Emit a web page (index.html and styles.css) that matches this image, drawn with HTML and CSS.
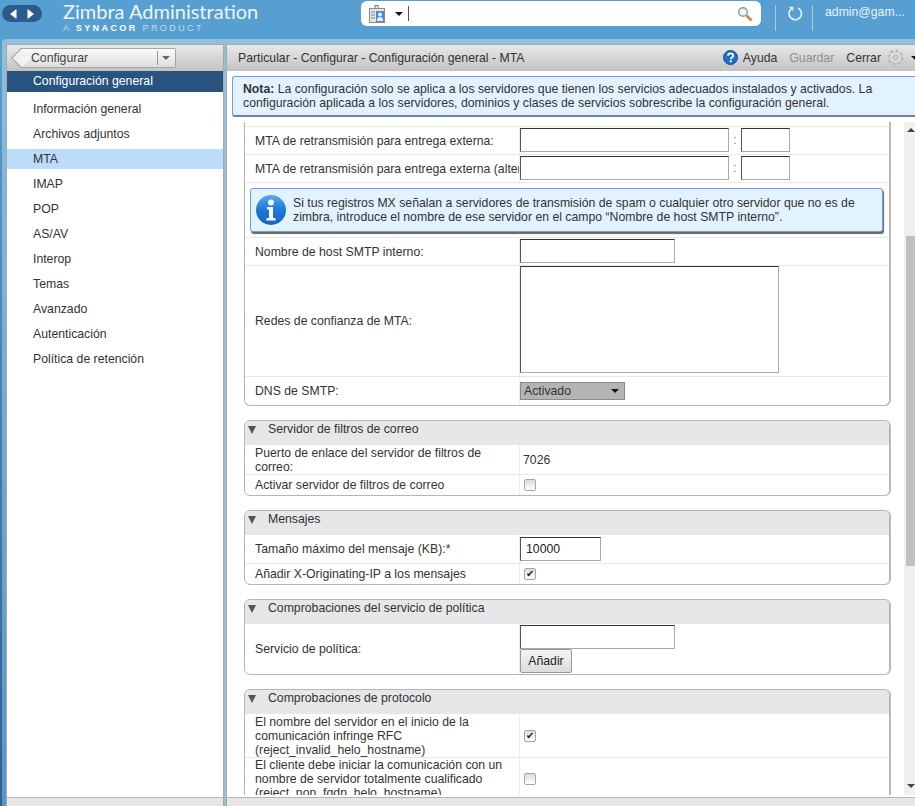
FILE: index.html
```html
<!DOCTYPE html>
<html lang="es">

<head>
    <meta charset="UTF-8">
    <title>Zimbra Administration</title>
    <link rel="stylesheet" href="styles.css">
</head>

<body>
    <header class="topbar">
        <div class="nav-pill">
            <svg width="7" height="10" viewBox="0 0 7 10"><path d="M6.500 0v10L0 5z" fill="#fff"/></svg>
            <svg width="7" height="10" viewBox="0 0 7 10"><path d="M.5 0v10L7 5z" fill="#fff"/></svg>
        </div>
        <div class="brand">
            <div class="brand-name">Zimbra Administration</div>
            <div class="brand-sub">A <b>SYNACOR</b> PRODUCT</div>
        </div>
        <div class="search">
            <svg class="search-type" width="16" height="18" viewBox="0 0 16 18">
                <rect x="6" y="0.5" width="3" height="4" fill="#fff" stroke="#777"/>
                <rect x="0.5" y="3.5" width="15" height="14" fill="#e4e4e4" stroke="#8a8a8a"/>
                <rect x="7" y="6" width="8" height="11" fill="#3d8fdc"/>
                <circle cx="11" cy="9.5" r="2" fill="#e8f2fb"/>
                <path d="M8 16c0-3 1-4 3-4s3 1 3 4z" fill="#e8f2fb"/>
                <path d="M2 7h4M2 10h4M2 13h4" stroke="#888"/>
            </svg>
            <span class="caret"></span>
            <span class="search-cursor"></span>
            <svg class="search-go" width="16" height="16" viewBox="0 0 16 16">
                <circle cx="6" cy="6" r="4.300" fill="#eef4f4" stroke="#7f9c9c" stroke-width="1.400"/>
                <path d="M9.500 9.500l5 5" stroke="#c98f2c" stroke-width="2.600"/>
            </svg>
        </div>
        <div class="top-sep"></div>
        <svg class="refresh" width="16" height="16" viewBox="0 0 16 16">
            <path d="M5.200 3.200A6.200 6.200 0 1 0 11 3" fill="none" stroke="#e4f0f8" stroke-width="1.700"/>
            <path d="M1.800 1.800h4.600v4.400z" fill="#e4f0f8"/>
        </svg>
        <div class="top-sep"></div>
        <div class="user">admin@gam...</div>
    </header>

    <div class="shell">
        <aside class="side">
            <div class="toolbar side-toolbar">
                <div class="crumb">
                    <span class="crumb-label">Configurar</span>
                    <span class="crumb-arrow"></span>
                </div>
            </div>
            <div class="side-title">Configuración general</div>
            <ul class="side-list">
                <li>Información general</li>
                <li>Archivos adjuntos</li>
                <li class="selected">MTA</li>
                <li>IMAP</li>
                <li>POP</li>
                <li>AS/AV</li>
                <li>Interop</li>
                <li>Temas</li>
                <li>Avanzado</li>
                <li>Autenticación</li>
                <li>Política de retención</li>
            </ul>
            <div class="foot"></div>
        </aside>

        <main class="main">
            <div class="toolbar main-toolbar">
                <span class="path">Particular - Configurar - Configuración general - MTA</span>
                <span class="actions">
                    <svg width="15" height="15" viewBox="0 0 15 15">
                        <circle cx="7.500" cy="7.500" r="7" fill="#1f6fc4" stroke="#15508f"/>
                        <path d="M5 5.800c0-3.200 5.200-3.200 5.200-.2 0 2-2.400 1.800-2.400 3.600" fill="none" stroke="#fff" stroke-width="1.800"/>
                        <rect x="6.800" y="10.300" width="2" height="2" fill="#fff"/>
                    </svg>
                    <span class="action">Ayuda</span>
                    <span class="action disabled">Guardar</span>
                    <span class="action">Cerrar</span>
                    <svg class="gear" width="17" height="17" viewBox="0 0 18 18">
                        <circle cx="9" cy="9" r="7.300" fill="none" stroke="#bcbcbc" stroke-width="2.800" stroke-dasharray="2.900 2.830"/>
                        <circle cx="9" cy="9" r="6" fill="#e4e4e4" stroke="#bcbcbc"/>
                        <circle cx="9" cy="9" r="2.800" fill="#d2d2d2" stroke="#ababab"/>
                    </svg>
                    <span class="caret small"></span>
                </span>
            </div>

            <div class="note">
                <b>Nota:</b> La configuración solo se aplica a los servidores que tienen los servicios adecuados instalados y activados. La<br>
                configuración aplicada a los servidores, dominios y clases de servicios sobrescribe la configuración general.
            </div>

            <div class="scroll-area">
                <div class="content">
                    <section class="card card-cut">
                        <div class="row blank"></div>
                        <div class="row r-28">
                            <div class="lbl clip">MTA de retransmisión para entrega externa:</div>
                            <div class="val"><span class="field w209"></span><span class="colon">:</span><span class="field w49"></span></div>
                        </div>
                        <div class="row r-28">
                            <div class="lbl clip">MTA de retransmisión para entrega externa (alternativa):</div>
                            <div class="val"><span class="field w209"></span><span class="colon">:</span><span class="field w49"></span></div>
                        </div>
                        <div class="row-full">
                            <div class="info">
                                <svg class="info-icon" width="30" height="30" viewBox="0 0 30 30">
                                    <defs>
                                        <linearGradient id="info-fill" x1="0" y1="0" x2="0" y2="1">
                                            <stop offset="0" stop-color="#5aa9ee"/>
                                            <stop offset="0.5" stop-color="#1c78d6"/>
                                            <stop offset="1" stop-color="#1565bd"/>
                                        </linearGradient>
                                    </defs>
                                    <circle cx="15" cy="15" r="15" fill="url(#info-fill)"/>
                                    <circle cx="15" cy="7.500" r="3" fill="#fff"/>
                                    <path d="M11 12h6v11h2.500v2.500h-9V23H13v-8.500h-2z" fill="#fff"/>
                                </svg>
                                <p>Si tus registros MX señalan a servidores de transmisión de spam o cualquier otro servidor que no es de<br>zimbra, introduce el nombre de ese servidor en el campo “Nombre de host SMTP interno”.</p>
                            </div>
                        </div>
                        <div class="row r-28">
                            <div class="lbl">Nombre de host SMTP interno:</div>
                            <div class="val"><span class="field w155"></span></div>
                        </div>
                        <div class="row r-111">
                            <div class="lbl">Redes de confianza de MTA:</div>
                            <div class="val val-top"><span class="field area"></span></div>
                        </div>
                        <div class="row r-28 last">
                            <div class="lbl">DNS de SMTP:</div>
                            <div class="val"><span class="select">Activado<span class="caret"></span></span></div>
                        </div>
                    </section>

                    <section class="card">
                        <h3 class="card-head">Servidor de filtros de correo</h3>
                        <div class="row r-30">
                            <div class="lbl">Puerto de enlace del servidor de filtros de correo:</div>
                            <div class="val plain">7026</div>
                        </div>
                        <div class="row r-20 last">
                            <div class="lbl">Activar servidor de filtros de correo</div>
                            <div class="val plain"><span class="check"></span></div>
                        </div>
                    </section>

                    <section class="card">
                        <h3 class="card-head">Mensajes</h3>
                        <div class="row r-29">
                            <div class="lbl">Tamaño máximo del mensaje (KB):*</div>
                            <div class="val"><span class="field w81 filled">10000</span></div>
                        </div>
                        <div class="row r-20 last">
                            <div class="lbl">Añadir X-Originating-IP a los mensajes</div>
                            <div class="val plain"><span class="check on">✔</span></div>
                        </div>
                    </section>

                    <section class="card">
                        <h3 class="card-head">Comprobaciones del servicio de política</h3>
                        <div class="row r-50 last">
                            <div class="lbl">Servicio de política:</div>
                            <div class="val stack"><span class="field w155"></span><span class="btn">Añadir</span></div>
                        </div>
                    </section>

                    <section class="card card-open">
                        <h3 class="card-head">Comprobaciones de protocolo</h3>
                        <div class="row r-44">
                            <div class="lbl">El nombre del servidor en el inicio de la comunicación infringe RFC (reject_invalid_helo_hostname)</div>
                            <div class="val plain"><span class="check on">✔</span></div>
                        </div>
                        <div class="row r-42">
                            <div class="lbl">El cliente debe iniciar la comunicación con un nombre de servidor totalmente cualificado (reject_non_fqdn_helo_hostname)</div>
                            <div class="val plain"><span class="check"></span></div>
                        </div>
                    </section>
                </div>
                <div class="scrollbar">
                    <span class="sb-up"></span>
                    <div class="sb-track"><div class="sb-thumb"></div></div>
                    <span class="sb-down"></span>
                </div>
            </div>
            <div class="foot"></div>
        </main>
    </div>
</body>

</html>
```

FILE: styles.css
```css
html,
body {
    margin: 0;
    height: 806px;
    overflow: hidden;
}

body {
    width: 915px;
    font-family: "Liberation Sans", Arial, sans-serif;
    font-size: 12.25px;
    color: #333;
    background: #579fd1;
}

.topbar {
    display: flex;
    align-items: flex-start;
    height: 39px;
    background: #579fd1;
}

.nav-pill {
    display: flex;
    align-items: center;
    justify-content: space-between;
    box-sizing: border-box;
    width: 40px;
    height: 17px;
    margin: 5px 0 0 2px;
    padding: 0 8px;
    border-radius: 9px;
    background: #2b5a8c;
}

.brand {
    width: 298px;
    margin-left: 21px;
    color: #eef5fa;
}

.brand-name {
    font-family: Lato, sans-serif;
    font-size: 20px;
    line-height: 23px;
}

.brand-sub {
    margin-top: 1px;
    color: #c4dcee;
    font-size: 9px;
    line-height: 9px;
    letter-spacing: 2.400px;
}

.brand-sub b {
    color: #fff;
}

.search {
    display: flex;
    align-items: center;
    width: 400px;
    height: 25px;
    margin-top: 1px;
    border-radius: 6px;
    background: #fff;
}

.search-type {
    margin: 0 0 0 8px;
}

.caret {
    display: inline-block;
    width: 0;
    height: 0;
    border-left: 4px solid transparent;
    border-right: 4px solid transparent;
    border-top: 4px solid #111;
}

.search .caret {
    margin-left: 10px;
}

.search-cursor {
    width: 1px;
    height: 15px;
    margin-left: 5px;
    background: #555;
}

.search-go {
    margin-left: auto;
    margin-right: 8px;
}

.top-sep {
    width: 1px;
    height: 26px;
    margin: 5px 0 0 14px;
    background: #a5cbe5;
}

.refresh {
    margin: 5px 0 0 11px;
}

.refresh + .top-sep {
    margin-left: 9px;
}

.user {
    margin: 5px 0 0 12px;
    color: #e8f2f9;
    line-height: 14px;
    white-space: nowrap;
}

.shell {
    display: flex;
    gap: 4px;
    height: 761px;
    padding: 6px 0 0 7px;
    border-top-left-radius: 6px;
    background:
        linear-gradient(#579fd1, #2f5f95) 0 0 / 2px 100% no-repeat,
        linear-gradient(#90bfd9, #5a95c5) 0 0 / 7px 100% no-repeat,
        #93bfd8;
}

.side {
    display: flex;
    flex-direction: column;
    width: 216px;
    background: #fff;
    box-shadow: 0 0 0 1px #a9a9a9;
}

.main {
    display: flex;
    flex-direction: column;
    flex: 1;
    min-width: 0;
    background: #fff;
    box-shadow: 0 0 0 1px #a9a9a9;
}

.toolbar {
    display: flex;
    align-items: center;
    box-sizing: border-box;
    height: 26px;
    flex: none;
    padding-bottom: 1px;
    background: linear-gradient(#e8e8e8, #c3c3c3);
}

.crumb {
    position: relative;
    display: flex;
    align-items: center;
    justify-content: space-between;
    box-sizing: border-box;
    width: 156px;
    height: 20px;
    margin-left: 13px;
    border: 1px solid #a5a5a5;
    border-left: 0;
    border-radius: 0 2px 2px 0;
    background: linear-gradient(#fafafa, #dedede);
}

.crumb::before {
    content: "";
    position: absolute;
    left: -6px;
    top: 2px;
    width: 13px;
    height: 13px;
    transform: rotate(45deg);
    border-left: 1px solid #a5a5a5;
    border-bottom: 1px solid #a5a5a5;
    background: linear-gradient(45deg, #eee, #f5f5f5);
}

.crumb-label {
    position: relative;
    margin-left: 11px;
    color: #444;
}

.crumb-arrow {
    position: relative;
    box-sizing: border-box;
    width: 18px;
    height: 14px;
    border-left: 1px solid #999;
}

.crumb-arrow::after {
    content: "";
    position: absolute;
    left: 4px;
    top: 5px;
    border-left: 4px solid transparent;
    border-right: 4px solid transparent;
    border-top: 4px solid #666;
}

.side-title {
    flex: none;
    height: 21px;
    padding-left: 26px;
    line-height: 20px;
    color: #fff;
    background: #2a5480;
}

.side-list {
    flex: 1;
    margin: 0;
    padding: 7px 0 0;
    list-style: none;
}

.side-list li {
    height: 20px;
    margin-bottom: 5px;
    padding-left: 26px;
    line-height: 20px;
}

.side-list .selected {
    background: #bcdcfb;
}

.foot {
    flex: none;
    height: 8px;
    border-top: 1px solid #b5b5b5;
    background: #e6e6e6;
}

.path {
    margin-left: 11px;
}

.main-toolbar {
    justify-content: space-between;
}

.actions {
    display: flex;
    align-items: center;
    margin-right: -4px;
}

.action {
    margin-left: 5px;
}

.action.disabled {
    margin-left: 12px;
    color: #8f8f8f;
}

.action.disabled + .action {
    margin-left: 12px;
}

.gear {
    margin-left: 6px;
}

.caret.small {
    margin-left: 7px;
}

.note {
    flex: none;
    box-sizing: border-box;
    height: 41px;
    margin: 5px 0 5px 5px;
    padding: 5px 0 0 10px;
    border: 1px solid #6f9be8;
    border-right: 0;
    border-bottom: 2px solid #6b82ad;
    border-radius: 3px 0 0 3px;
    line-height: 14px;
    background: #e2f2fe;
}

.scroll-area {
    display: flex;
    flex: 1;
    min-height: 0;
    padding-bottom: 2px;
    overflow: hidden;
}

.content {
    flex: 1;
    min-width: 0;
    padding-left: 17px;
    padding-right: 14px;
    overflow: hidden;
}

.card {
    margin-bottom: 14px;
    border: 1px solid #b5b5b5;
    border-radius: 6px;
    box-shadow: 1px 0 0 #bbb;
}

.card-cut {
    border-top: 0;
    border-radius: 0 0 6px 6px;
}

.card-open {
    border-bottom: 0;
    margin-bottom: 0;
}

.card-head {
    position: relative;
    box-sizing: border-box;
    height: 24px;
    margin: 0;
    padding-left: 23px;
    border-radius: 5px 5px 0 0;
    font-size: 12.25px;
    font-weight: normal;
    line-height: 17px;
    background: #e6e7e9;
}

.card-head::before {
    content: "";
    position: absolute;
    left: 3px;
    top: 5px;
    border-left: 4.500px solid transparent;
    border-right: 4.500px solid transparent;
    border-top: 8px solid #555;
}

.row {
    display: flex;
    box-sizing: border-box;
    border-bottom: 1px solid #e8e8e8;
}

.row.last {
    border-bottom: 0;
}

.row.blank {
    height: 5px;
}

.r-20 { height: 20px; }
.r-28 { height: 28px; }
.r-29 { height: 29px; }
.r-30 { height: 30px; }
.r-42 { height: 42px; }
.r-44 { height: 44px; }
.r-50 { height: 50px; }
.r-111 { height: 111px; }

.r-20 .lbl {
    padding-bottom: 1px;
}

.lbl {
    display: flex;
    align-items: center;
    flex: none;
    box-sizing: border-box;
    width: 274px;
    padding-left: 10px;
    padding-right: 8px;
    line-height: 14px;
}

.lbl.clip {
    padding-right: 0;
    white-space: nowrap;
    overflow: hidden;
}

.val {
    display: flex;
    align-items: center;
    flex: 1;
    min-width: 0;
    border-left: 1px solid #eee;
}

.r-28 .val {
    padding-bottom: 1px;
}

.val.plain {
    padding-left: 3px;
}

.val.plain .check {
    margin-left: 1px;
}

.val-top {
    align-items: flex-start;
}

.val.stack {
    flex-direction: column;
    align-items: flex-start;
    padding-top: 1px;
}

.field {
    display: block;
    box-sizing: border-box;
    height: 24px;
    flex: none;
    border: 1px solid #a9a9a9;
    border-top-color: #333;
    border-left-color: #555;
    background: #fff;
}

.w209 { width: 209px; }
.w49 { width: 49px; }
.w155 { width: 155px; }
.w81 { width: 81px; }

.area {
    width: 259px;
    height: 107px;
}

.filled {
    padding-left: 5px;
    line-height: 22px;
    color: #222;
}

.colon {
    width: 12px;
    text-align: center;
    color: #777;
}

.row-full {
    padding: 5px 6px 5px 5px;
    border-bottom: 1px solid #e8e8e8;
}

.info {
    display: flex;
    align-items: center;
    box-sizing: border-box;
    height: 44px;
    padding-left: 5px;
    border: 1px solid #6f9be8;
    border-radius: 3px;
    line-height: 14px;
    background: #e2f2fe;
    box-shadow: 1px 2px 1px #666;
}

.info p {
    margin: 0 0 0 7px;
}

.info-icon {
    flex: none;
}

.select {
    display: flex;
    align-items: center;
    justify-content: space-between;
    box-sizing: border-box;
    width: 105px;
    height: 18px;
    padding: 0 5px 0 3px;
    border: 1px solid #8a8a8a;
    background: #b4b4b4;
}

.check {
    display: block;
    box-sizing: border-box;
    width: 12px;
    height: 12px;
    border: 1px solid #a5a5a5;
    border-radius: 2px;
    font-size: 10px;
    line-height: 10px;
    text-align: center;
    background: linear-gradient(#dcdcdc, #fff);
    color: #222;
}

.btn {
    box-sizing: border-box;
    width: 52px;
    height: 24px;
    border: 1px solid #999;
    border-radius: 2px;
    line-height: 22px;
    text-align: center;
    background: linear-gradient(#f5f5f5, #dcdcdc);
    color: #222;
}

.scrollbar {
    display: flex;
    flex-direction: column;
    align-items: center;
    flex: none;
    box-sizing: border-box;
    width: 11px;
    padding-left: 2px;
    background: #f0f0f0;
}

.sb-up,
.sb-down {
    position: relative;
    flex: none;
    height: 12px;
    width: 0;
}

.sb-up::after,
.sb-down::after {
    content: "";
    position: absolute;
    left: -4px;
    border-left: 4px solid transparent;
    border-right: 4px solid transparent;
}

.sb-up::after {
    top: 6px;
    border-bottom: 4px solid #444;
}

.sb-down::after {
    top: 1px;
    border-top: 4px solid #444;
}

.sb-track {
    flex: 1;
    width: 100%;
}

.sb-thumb {
    height: 330px;
    margin-top: 102px;
    background: #c0c0c0;
}
```
